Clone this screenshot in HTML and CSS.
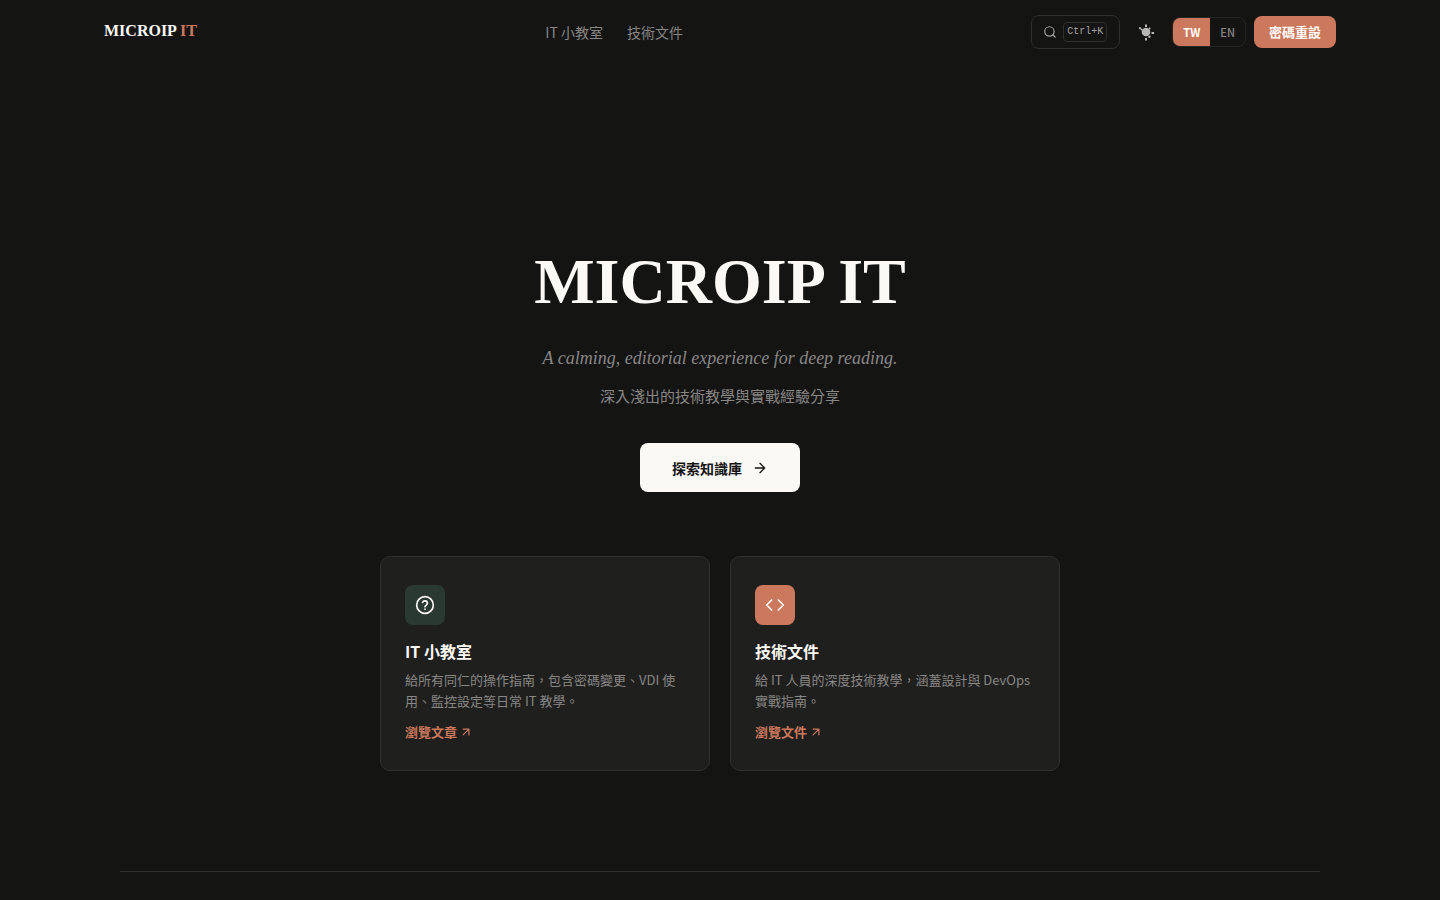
FILE: index.html
```html
<!DOCTYPE html>
<html lang="zh-Hant">
<head>
<meta charset="utf-8">
<meta name="viewport" content="width=device-width, initial-scale=1">
<title>MICROIP IT</title>
<link rel="stylesheet" href="styles.css">
</head>
<body>
<header class="site-header">
  <a class="logo" href="#">MICROIP <span class="logo-accent">IT</span></a>
  <nav class="nav">
    <a class="nav-link" href="#classroom">IT 小教室</a>
    <a class="nav-link" href="#docs">技術文件</a>
  </nav>
  <div class="actions">
    <button class="search" type="button" aria-label="Search">
      <svg class="icon" width="14" height="14" viewBox="0 0 24 24" stroke-width="2"><circle cx="11" cy="11" r="8"/><path d="M21 21l-4.3-4.3"/></svg>
      <kbd class="kbd">Ctrl+K</kbd>
    </button>
    <button class="theme" type="button" aria-label="Toggle theme">
      <svg width="18" height="18" viewBox="0 0 18 18" fill="currentColor"><circle cx="9" cy="9" r="4.3"/><rect x="8" y="1.5" width="2" height="2.5"/><rect x="8" y="15" width="2" height="2.5"/><rect x="14.5" y="9" width="2.6" height="2"/><circle cx="3" cy="5.2" r="1.1"/><circle cx="4.6" cy="6.6" r="1"/><circle cx="12.6" cy="5.4" r="1"/><circle cx="12.4" cy="13.8" r="1.2"/></svg>
    </button>
    <div class="lang">
      <button class="lang-item lang-active" type="button">TW</button>
      <button class="lang-item" type="button">EN</button>
    </div>
    <a class="reset" href="#reset">密碼重設</a>
  </div>
</header>
<main class="main">
  <section class="hero">
    <h1 class="title">MICROIP IT</h1>
    <p class="tagline">A calming, editorial experience for deep reading.</p>
    <p class="subtitle">深入淺出的技術教學與實戰經驗分享</p>
    <a class="explore" href="#library">探索知識庫
      <svg class="icon" width="16" height="16" viewBox="0 0 24 24" stroke-width="2"><path d="M5 12h14M12 5l7 7-7 7"/></svg>
    </a>
  </section>
  <section class="cards">
    <a class="card" href="#classroom">
      <span class="badge badge-green"><svg class="icon" width="20" height="20" viewBox="0 0 24 24" stroke-width="2"><circle cx="12" cy="12" r="10"/><path d="M9.1 9a3 3 0 0 1 5.8 1c0 2-2.9 2.6-2.9 4M12 17h.01"/></svg></span>
      <h2 class="card-title">IT 小教室</h2>
      <p class="card-text">給所有同仁的操作指南，包含密碼變更、VDI 使用、監控設定等日常 IT 教學。</p>
      <span class="card-link">瀏覽文章 <svg class="icon" width="14" height="14" viewBox="0 0 24 24" stroke-width="2"><path d="M7 17L17 7M7 7h10v10"/></svg></span>
    </a>
    <a class="card" href="#docs">
      <span class="badge badge-clay"><svg class="icon" width="20" height="20" viewBox="0 0 24 24" stroke-width="2"><path d="M8 6l-6 6 6 6M16 6l6 6-6 6"/></svg></span>
      <h2 class="card-title">技術文件</h2>
      <p class="card-text">給 IT 人員的深度技術教學，涵蓋設計與 DevOps 實戰指南。</p>
      <span class="card-link">瀏覽文件 <svg class="icon" width="14" height="14" viewBox="0 0 24 24" stroke-width="2"><path d="M7 17L17 7M7 7h10v10"/></svg></span>
    </a>
  </section>
  <hr class="divider">
</main>
</body>
</html>
```
FILE: styles.css
```css
:root {
  --bg: #141413;
  --card: #1f1f1e;
  --line: #30302e;
  --text: #faf9f5;
  --muted: #888784;
  --clay: #cc785c;
  --serif: "Liberation Serif", serif;
  --sans: "Noto Sans CJK TC", sans-serif;
}
* { box-sizing: border-box; }
body {
  margin: 0;
  background: var(--bg);
  color: var(--text);
  font-family: var(--sans);
}
a { color: inherit; text-decoration: none; }
button { font-family: inherit; cursor: pointer; }
.icon {
  fill: none;
  stroke: currentColor;
  stroke-linecap: round;
  stroke-linejoin: round;
  flex: none;
}
.site-header {
  display: flex;
  justify-content: space-between;
  align-items: center;
  max-width: 1280px;
  height: 64px;
  margin: 0 auto;
  padding: 0 24px;
}
.logo {
  font: bold 16px/20px var(--serif);
  padding-bottom: 2px;
}
.logo-accent { color: var(--clay); }
.nav {
  display: flex;
  gap: 24px;
  font-size: 14px;
  line-height: 20px;
  color: var(--muted);
}
.actions {
  display: flex;
  align-items: center;
  gap: 8px;
}
.search {
  display: flex;
  align-items: center;
  gap: 6px;
  height: 34px;
  padding: 0 12px 0 11px;
  border: 1px solid var(--line);
  border-radius: 8px;
  background: none;
  color: #a3a29e;
}
.kbd {
  padding: 0 3px;
  border: 1px solid var(--line);
  border-radius: 4px;
  font: 10px/18px "Liberation Mono", monospace;
}
.theme {
  display: grid;
  place-items: center;
  width: 36px;
  height: 36px;
  padding: 0;
  border: 0;
  background: none;
  color: #b8b7b4;
}
.lang {
  display: flex;
  height: 30px;
  border: 1px solid #262625;
  border-radius: 8px;
  overflow: hidden;
}
.lang-item {
  padding: 0 10px;
  border: 0;
  background: none;
  color: var(--muted);
  font-size: 11px;
  font-weight: 500;
}
.lang-active {
  background: var(--clay);
  color: #fff;
  font-weight: 700;
}
.reset {
  padding: 0 15px;
  border-radius: 8px;
  background: var(--clay);
  color: #fff;
  font-size: 13px;
  font-weight: 700;
  line-height: 32px;
}
.main {
  max-width: 1200px;
  margin: 0 auto;
  padding-top: 180px;
}
.hero {
  display: flex;
  flex-direction: column;
  align-items: center;
  text-align: center;
}
.title {
  margin: 0;
  font: bold 64px/76px var(--serif);
}
.tagline {
  margin: 24px 0 0;
  color: var(--muted);
  font: italic 18px/28px var(--serif);
}
.subtitle {
  margin: 12px 0 0;
  color: var(--muted);
  font-size: 15px;
  line-height: 24px;
}
.explore {
  display: flex;
  align-items: center;
  gap: 10px;
  height: 49px;
  margin-top: 35px;
  padding: 0 32px;
  border-radius: 8px;
  background: var(--text);
  color: var(--bg);
  font-size: 14px;
  font-weight: 700;
}
.cards {
  display: grid;
  grid-template-columns: 1fr 1fr;
  gap: 20px;
  max-width: 680px;
  margin: 64px auto 0;
}
.card {
  display: flex;
  flex-direction: column;
  align-items: flex-start;
  padding: 28px 24px;
  border: 1px solid var(--line);
  border-radius: 10px;
  background: var(--card);
}
.badge {
  display: grid;
  place-items: center;
  width: 40px;
  height: 40px;
  border-radius: 8px;
}
.badge-green { background: #2b3933; }
.badge-clay { background: var(--clay); }
.card-title {
  margin: 15px 0 7px;
  font-size: 16px;
  font-weight: 700;
  line-height: 22px;
}
.card-text {
  margin: 0 0 10px;
  color: var(--muted);
  font-size: 13px;
  line-height: 21px;
}
.card-link {
  display: flex;
  align-items: center;
  gap: 2px;
  color: var(--clay);
  font-size: 13px;
  font-weight: 700;
  line-height: 21px;
}
.divider {
  height: 1px;
  margin: 100px 0 0;
  border: 0;
  background: var(--line);
}
```
